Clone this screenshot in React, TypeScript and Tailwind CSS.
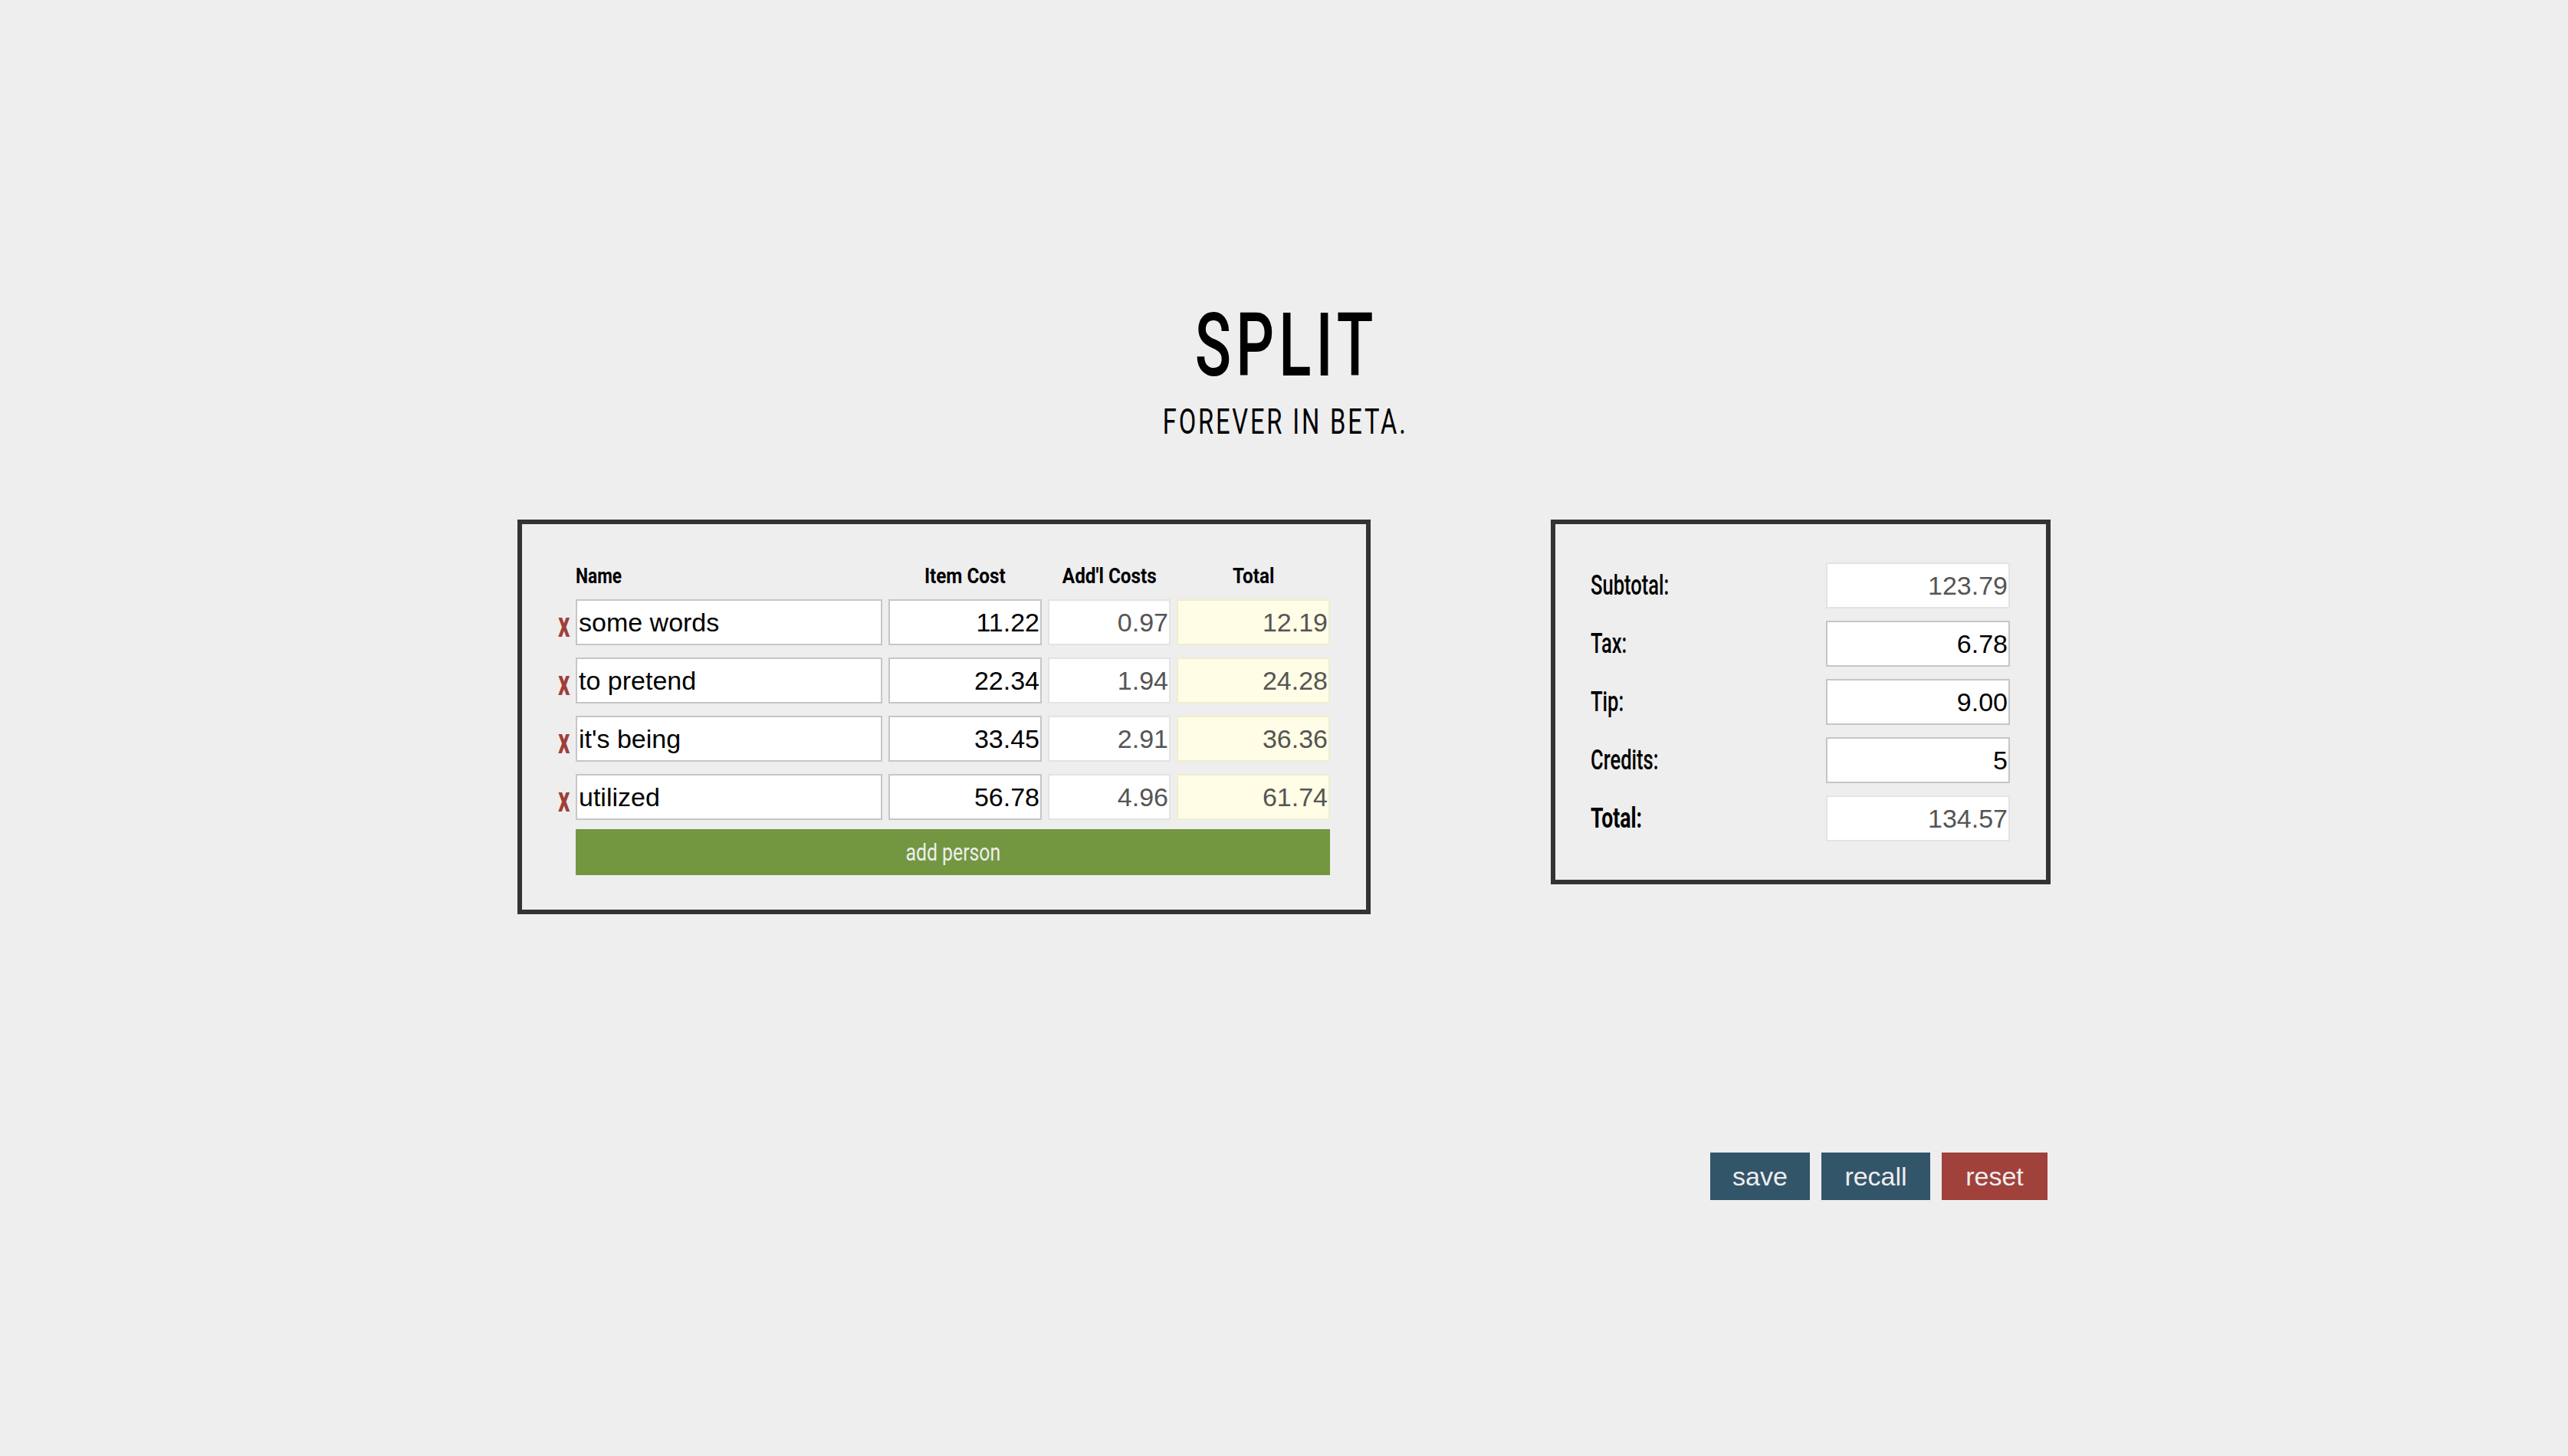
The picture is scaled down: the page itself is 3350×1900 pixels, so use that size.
import React from "react";

const roboto = { fontFamily: 'Roboto, "Liberation Sans", sans-serif' };

const rows = [
  { name: "some words", cost: "11.22", add: "0.97", total: "12.19" },
  { name: "to pretend", cost: "22.34", add: "1.94", total: "24.28" },
  { name: "it's being", cost: "33.45", add: "2.91", total: "36.36" },
  { name: "utilized", cost: "56.78", add: "4.96", total: "61.74" },
];

const summary = [
  { label: "Subtotal:", value: "123.79", ro: true, bold: false },
  { label: "Tax:", value: "6.78", ro: false, bold: false },
  { label: "Tip:", value: "9.00", ro: false, bold: false },
  { label: "Credits:", value: "5", ro: false, bold: false },
  { label: "Total:", value: "134.57", ro: true, bold: true },
];

function Cond({ children, className }: { children: React.ReactNode; className: string }) {
  return (
    <span className={`inline-block whitespace-nowrap ${className}`} style={roboto}>
      {children}
    </span>
  );
}

export default function App() {
  return (
    <div
      className="w-full min-h-[1900px] bg-[#eeeeee] pt-[393px] text-black"
      style={{ fontFamily: '"Liberation Sans", Arial, sans-serif' }}
    >
      <div className="flex flex-col items-center">
        <h1 className="text-[115px] leading-none h-[115px]">
          <Cond className="font-medium tracking-[9px] pl-[9px] scale-x-[0.68] origin-center">SPLIT</Cond>
        </h1>
        <div className="mt-[19px] text-[46px] leading-none h-[46px]">
          <Cond className="font-normal tracking-[4px] pl-[4px] scale-x-[0.71] origin-center">FOREVER IN BETA.</Cond>
        </div>
      </div>

      <div className="w-[2000px] mx-auto mt-[105px]">
        <div className="flex justify-between items-start">
          {/* left panel */}
          <div className="w-[1113px] border-[6px] border-[#333333] pt-[55px] pb-[45px] pl-[45px]">
            <div className="flex items-end h-[27px] mb-[16px] text-[27px] leading-none">
              <div className="w-[25px]" />
              <div className="w-[400px]">
                <Cond className="font-bold scale-x-[0.84] origin-left">Name</Cond>
              </div>
              <div className="w-[200px] ml-[8px] text-center">
                <Cond className="font-bold scale-x-[0.9] origin-center">Item Cost</Cond>
              </div>
              <div className="w-[160px] ml-[8px] text-center">
                <Cond className="font-bold scale-x-[0.9] origin-center">Add&apos;l Costs</Cond>
              </div>
              <div className="w-[200px] ml-[8px] text-center">
                <Cond className="font-bold scale-x-[0.9] origin-center">Total</Cond>
              </div>
            </div>
            <div className="flex flex-col gap-[16px]">
              {rows.map((r) => (
                <div key={r.name} className="flex items-center h-[60px]">
                  <div className="w-[25px] text-[46px] leading-none text-[#9f3f39] pl-[2px] mt-[6px]">
                    <Cond className="font-bold scale-x-[0.66] origin-left">x</Cond>
                  </div>
                  <div className="w-[400px] h-[60px] bg-white border-2 border-[#c6c6c6] pl-[2px] flex items-center text-[34px]">
                    {r.name}
                  </div>
                  <div className="w-[200px] h-[60px] ml-[8px] bg-white border-2 border-[#c6c6c6] pr-[1px] flex items-center justify-end text-[34px]">
                    {r.cost}
                  </div>
                  <div className="w-[160px] h-[60px] ml-[8px] bg-white border-2 border-[#e3e3e3] pr-[1px] flex items-center justify-end text-[34px] text-[#555555]">
                    {r.add}
                  </div>
                  <div className="w-[200px] h-[60px] ml-[8px] bg-[#fffde5] border-2 border-[#efedd0] pr-[1px] flex items-center justify-end text-[34px] text-[#555555]">
                    {r.total}
                  </div>
                </div>
              ))}
              <div className="flex h-[60px] -mt-[4px]">
                <div className="w-[25px]" />
                <button className="w-[984px] h-[60px] bg-[#739741] text-[#eeeeee] text-[31px] leading-none">
                  <Cond className="font-normal scale-x-[0.8] origin-center">add person</Cond>
                </button>
              </div>
            </div>
          </div>

          {/* right panel */}
          <div className="w-[652px] border-[6px] border-[#333333] pt-[50px] pb-[50px] pl-[46px] pr-[47px]">
            <div className="flex flex-col gap-[16px]">
              {summary.map((s) => (
                <div key={s.label} className="flex items-center justify-between h-[60px]">
                  <div className="text-[36px] leading-none">
                    <Cond
                      className={
                        s.bold
                          ? "font-bold scale-x-[0.74] origin-left"
                          : "font-medium scale-x-[0.71] origin-left"
                      }
                    >
                      {s.label}
                    </Cond>
                  </div>
                  <div
                    className={`w-[240px] h-[60px] bg-white border-2 pr-[1px] flex items-center justify-end text-[34px] ${
                      s.ro ? "border-[#e3e3e3] text-[#555555]" : "border-[#c6c6c6] text-black"
                    }`}
                  >
                    {s.value}
                  </div>
                </div>
              ))}
            </div>
          </div>
        </div>

        <div className="flex justify-end gap-[15px] mt-[311px] pr-[4px]">
          <button className="w-[130px] h-[62px] bg-[#33556a] text-[#eeeeee] text-[34px] leading-none">save</button>
          <button className="w-[142px] h-[62px] bg-[#33556a] text-[#eeeeee] text-[34px] leading-none">recall</button>
          <button className="w-[138px] h-[62px] bg-[#a0413c] text-[#eeeeee] text-[34px] leading-none">reset</button>
        </div>
      </div>
    </div>
  );
}
